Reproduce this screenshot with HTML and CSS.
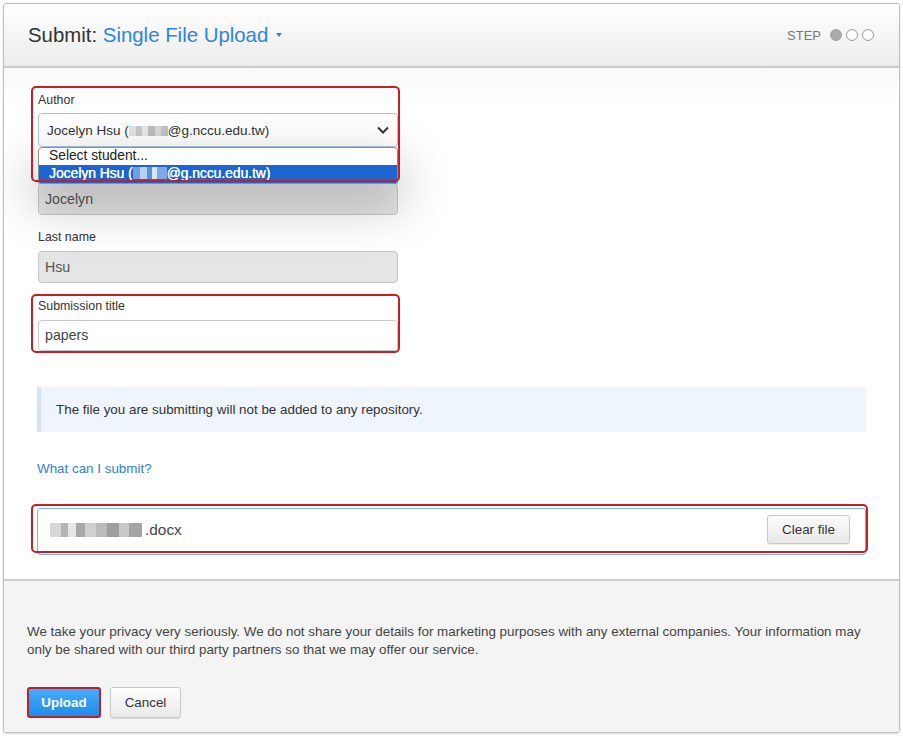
FILE: index.html
```html
<!DOCTYPE html>
<html lang="en">
<head>
<meta charset="utf-8">
<title>Submit: Single File Upload</title>
<link rel="stylesheet" href="styles.css">
</head>
<body>
<div class="modal">
  <header class="modal-header">
    <h1 class="title">Submit: <span class="title-link">Single File Upload<span class="caret"></span></span></h1>
    <div class="steps">STEP <span class="dot filled"></span><span class="dot"></span><span class="dot"></span></div>
  </header>

  <main class="modal-body">
    <div class="field author">
      <label class="label">Author</label>
      <div class="select">
        <span>Jocelyn Hsu (<span class="blur blur-gray"></span>@g.nccu.edu.tw)</span>
        <svg class="chevron" width="12" height="8" viewBox="0 0 12 8"><path d="M1 1.5 L6 6.5 L11 1.5" fill="none" stroke="#333" stroke-width="2"/></svg>
      </div>
      <ul class="dropdown">
        <li>Select student...</li>
        <li class="active">Jocelyn Hsu (<span class="blur blur-blue"></span>@g.nccu.edu.tw)</li>
      </ul>
      <div class="highlight author-hl"></div>
    </div>

    <div class="field">
      <label class="label">First name</label>
      <div class="input readonly">Jocelyn</div>
    </div>

    <div class="field">
      <label class="label">Last name</label>
      <div class="input readonly">Hsu</div>
    </div>

    <div class="field boxed">
      <label class="label">Submission title</label>
      <div class="input title-input">papers</div>
    </div>

    <div class="info">The file you are submitting will not be added to any repository.</div>

    <a class="help-link" href="#">What can I submit?</a>

    <div class="file-box">
      <span class="file-name"><span class="blur blur-file"></span>.docx</span>
      <button class="btn btn-clear" type="button">Clear file</button>
    </div>
  </main>

  <footer class="modal-footer">
    <p class="privacy">We take your privacy very seriously. We do not share your details for marketing purposes with any external companies. Your information may only be shared with our third party partners so that we may offer our service.</p>
    <div class="actions">
      <button class="btn btn-upload" type="button">Upload</button>
      <button class="btn btn-cancel" type="button">Cancel</button>
    </div>
  </footer>
</div>
</body>
</html>
```

FILE: styles.css
```css
* { box-sizing: border-box; }

body {
  margin: 0;
  background: #ffffff;
  font-family: "Liberation Sans", Arial, sans-serif;
  color: #333;
}

.modal {
  margin: 3px;
  width: 897px;
  height: 730px;
  border: 1px solid #bdbdbd;
  border-radius: 3px;
  display: flex;
  flex-direction: column;
  overflow: hidden;
  box-shadow: 0 1px 2px rgba(0,0,0,0.15);
}

/* Header */
.modal-header {
  height: 64px;
  flex: none;
  display: flex;
  align-items: center;
  justify-content: space-between;
  padding: 0 25px 0 24px;
  background: linear-gradient(#ffffff, #ececec);
  border-bottom: 2px solid #cbcbcb;
}

.title {
  margin: 0;
  font-size: 20.4px;
  font-weight: normal;
  color: #333;
}

.title-link {
  color: #2c86db;
}

.caret {
  display: inline-block;
  margin-left: 8px;
  vertical-align: 5px;
  border-left: 3.5px solid transparent;
  border-right: 3.5px solid transparent;
  border-top: 4px solid #2c86db;
}

.steps {
  display: flex;
  align-items: center;
  gap: 4px;
  font-size: 13px;
  color: #777;
}

.steps .dot:first-of-type { margin-left: 5px; }

.dot {
  width: 12px;
  height: 12px;
  border-radius: 50%;
  border: 1.5px solid #9a9a9a;
  background: #fff;
}

.dot.filled {
  background: #aaaaaa;
  border-color: #a3a3a3;
}

/* Body */
.modal-body {
  flex: 1;
  padding: 24px 33px 0 34px;
  background: linear-gradient(#f8f9fa, #ffffff 40px);
}

.field {
  width: 360px;
  margin-top: 14px;
}

.field:first-child { margin-top: 0; }

.label {
  display: block;
  height: 16px;
  line-height: 16px;
  font-size: 12.4px;
  color: #333;
  margin-bottom: 6px;
}

.author { position: relative; }
.author .label { margin-bottom: 5px; }

.select {
  height: 34px;
  border: 1px solid #a9c4e2;
  border-radius: 4px;
  background: #fff;
  display: flex;
  align-items: center;
  justify-content: space-between;
  padding: 0 8px 0 8px;
  font-size: 13.5px;
  color: #333;
}

.dropdown {
  position: absolute;
  z-index: 2;
  top: 55px;
  left: 0;
  width: 360px;
  margin: 0;
  padding: 0;
  list-style: none;
  background: #fff;
  border: 1px solid #8f8f8f;
  border-radius: 4px 4px 2px 2px;
  overflow: hidden;
  box-shadow: 0 18px 50px 6px rgba(0,0,0,0.22);
  font-size: 13.8px;
  color: #222;
}

.dropdown li {
  height: 17px;
  line-height: 16px;
  padding-left: 10px;
}

.dropdown li.active {
  height: 18px;
  line-height: 17px;
  background: #1b66d3;
  color: #fff;
  font-weight: 500;
  text-shadow: 0.3px 0 0 #fff;
}

.highlight {
  position: absolute;
  z-index: 3;
  border: 2px solid #c41e26;
  border-radius: 5px;
  pointer-events: none;
}

.author-hl {
  top: -6px;
  left: -7px;
  width: 369px;
  height: 96px;
}

.input {
  height: 32px;
  line-height: 30px;
  border: 1px solid #c6c6c6;
  border-radius: 4px;
  padding-left: 6px;
  font-size: 14.2px;
  color: #444;
  background: #fff;
}

.input.readonly {
  background: #e5e5e5;
  color: #555;
}

.boxed {
  width: 369px;
  margin-top: 11px;
  margin-left: -7px;
  padding: 2px 0 0 5px;
  border: 2px solid #c41e26;
  border-radius: 5px;
}

.title-input {
  height: 31px;
  line-height: 29px;
  border-color: #c9c9c9;
}

.blur {
  display: inline-block;
  vertical-align: -1px;
}

.blur-gray {
  width: 39px;
  height: 10px;
  background: linear-gradient(90deg, #e4e4e4 0 18%, #c9c9c9 18% 34%, #e9e9e9 34% 48%, #bdbdbd 48% 66%, #d8d8d8 66% 82%, #c4c4c4 82% 100%);
}

.blur-blue {
  width: 34px;
  height: 12px;
  background: linear-gradient(90deg, #6f9ee6 0 20%, #b9d0f2 20% 40%, #5d8fe0 40% 55%, #d8e5f7 55% 72%, #7ca7e8 72% 100%);
}

.blur-file {
  width: 92px;
  height: 14px;
  vertical-align: -2px;
  margin-right: 3px;
  background: linear-gradient(90deg, #d8d8d8 0 12%, #b4b4b4 12% 20%, #e6e6e6 20% 28%, #a8a8a8 28% 38%, #d0d0d0 38% 50%, #bbbbbb 50% 62%, #9e9e9e 62% 75%, #c8c8c8 75% 86%, #a4a4a4 86% 100%);
}

.info {
  margin-top: 34px;
  margin-left: -1px;
  height: 45px;
  display: flex;
  align-items: center;
  padding-left: 15px;
  background: #eef5fc;
  border-left: 4px solid #d4e3f2;
  font-size: 13.4px;
  color: #333;
}

.help-link {
  display: block;
  width: max-content;
  margin-top: 29px;
  margin-left: -1px;
  height: 16px;
  line-height: 16px;
  font-size: 13.4px;
  color: #2f80d2;
  text-decoration: none;
}

.file-box {
  position: relative;
  margin-top: 31px;
  margin-left: -1px;
  height: 47px;
  border: 1px solid #86addb;
  border-radius: 3px;
  display: flex;
  align-items: center;
  justify-content: space-between;
  padding: 0 15px 4px 12px;
}

.file-box::after {
  content: "";
  position: absolute;
  top: -5px;
  left: -7px;
  right: -3px;
  bottom: 1px;
  border: 2px solid #c41e26;
  border-radius: 5px;
  pointer-events: none;
}

.file-name {
  font-size: 15.4px;
  color: #444;
}

.btn {
  font-family: "Liberation Sans", Arial, sans-serif;
  font-size: 13.4px;
  border-radius: 3px;
  cursor: pointer;
}

.btn-clear {
  width: 83px;
  height: 29px;
  border: 1px solid #c9c9c9;
  background: linear-gradient(#fbfbfb, #e8e8e8);
  color: #333;
  box-shadow: 0 1px 1px rgba(0,0,0,0.08);
}

/* Footer */
.modal-footer {
  height: 153px;
  flex: none;
  background: #f4f4f4;
  border-top: 2px solid #cdcdcd;
  padding: 42px 23px 0 23px;
}

.privacy {
  margin: 0;
  font-size: 13.4px;
  line-height: 18px;
  color: #444;
}

.actions {
  margin-top: 28px;
  display: flex;
  gap: 9px;
}

.btn-upload {
  width: 74px;
  height: 31px;
  border: 2px solid #b3242d;
  background: linear-gradient(#45acfa, #1f8cec);
  color: #fff;
  font-weight: bold;
}

.btn-cancel {
  width: 71px;
  height: 31px;
  border: 1px solid #c9c9c9;
  background: linear-gradient(#ffffff, #e9e9e9);
  color: #333;
  box-shadow: 0 1px 1px rgba(0,0,0,0.1);
}
```
